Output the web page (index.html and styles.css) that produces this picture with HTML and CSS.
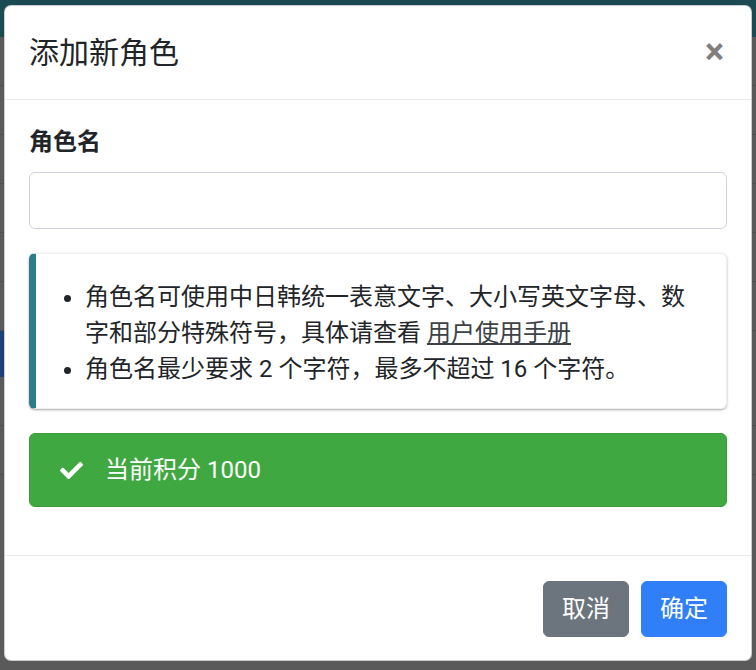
FILE: index.html
```html
<!DOCTYPE html>
<html lang="zh-CN">
<head>
<meta charset="utf-8">
<title>添加新角色</title>
<link rel="stylesheet" href="styles.css">
</head>
<body>
<div class="page">
  <div class="topbar"></div>
  <div class="page-body">
    <div class="row"></div>
    <div class="row"></div>
    <div class="row"></div>
    <div class="row"></div>
    <div class="row"></div>
    <div class="row"></div>
    <div class="row blue"></div>
    <div class="row"></div>
    <div class="row"></div>
  </div>
</div>

<div class="modal">
  <div class="modal-header">
    <h5 class="modal-title">添加新角色</h5>
    <button class="close" type="button">×</button>
  </div>
  <div class="modal-body">
    <div class="form-group">
      <label class="label">角色名</label>
      <input class="form-control" type="text">
    </div>
    <div class="callout">
      <ul class="rules">
        <li>角色名可使用中日韩统一表意文字、大小写英文字母、数字和部分特殊符号，具体请查看 <a class="link" href="#">用户使用手册</a></li>
        <li>角色名最少要求 2 个字符，最多不超过 16 个字符。</li>
      </ul>
    </div>
    <div class="alert">
      <svg class="check" viewBox="0 0 512 512" aria-hidden="true"><path d="M173.898 439.404l-166.4-166.4c-9.997-9.997-9.997-26.206 0-36.204l36.203-36.204c9.997-9.998 26.207-9.998 36.204 0L192 312.69 432.095 72.596c9.997-9.997 26.207-9.997 36.204 0l36.203 36.204c9.997 9.997 9.997 26.206 0 36.204l-294.4 294.401c-9.998 9.997-26.207 9.997-36.204-.001z" fill="#fff"/></svg>
      <span>当前积分 1000</span>
    </div>
  </div>
  <div class="modal-footer">
    <button class="btn btn-secondary" type="button">取消</button>
    <button class="btn btn-primary" type="button">确定</button>
  </div>
</div>
</body>
</html>
```

FILE: styles.css
```css
* { box-sizing: border-box; }

html, body {
  margin: 0;
  padding: 0;
}

body {
  width: 756px;
  height: 670px;
  overflow: hidden;
  position: relative;
  background: #5a5a5a;
  font-family: Roboto, "Noto Sans CJK SC", sans-serif;
  color: #212529;
}

.page {
  display: flex;
  flex-direction: column;
  height: 670px;
}

.topbar {
  height: 37px;
  background: #1c4a52;
}

.page-body {
  display: flex;
  flex-direction: column;
}

.row {
  height: 49px;
  border-bottom: 1px solid #4f4f4f;
}

.row.blue {
  height: 46px;
  width: 320px;
  background: #1d3f7a;
  border-bottom: 0;
}

.modal {
  position: absolute;
  top: 5px;
  left: 4px;
  width: 748px;
  background: #fff;
  border: 1px solid rgba(0, 0, 0, 0.2);
  border-radius: 7px;
  display: flex;
  flex-direction: column;
}

.modal-header {
  display: flex;
  align-items: flex-start;
  justify-content: space-between;
  padding: 24px;
  border-bottom: 1px solid #e9ecef;
}

.modal-title {
  margin: 0;
  font-size: 30px;
  font-weight: 400;
  line-height: 45px;
}

.close {
  padding: 28px 27px 20px 24px;
  margin: -24px -24px -24px auto;
  background: transparent;
  border: 0;
  font-family: Roboto, sans-serif;
  font-size: 36px;
  font-weight: 700;
  line-height: 1;
  color: #000;
  opacity: 0.5;
}

.modal-body {
  padding: 24px;
  display: flex;
  flex-direction: column;
}

.form-group {
  margin-bottom: 24px;
  display: flex;
  flex-direction: column;
  align-items: flex-start;
}

.label {
  font-size: 24px;
  line-height: 36px;
  font-weight: 700;
  margin-bottom: 12px;
}

.form-control {
  display: block;
  width: 100%;
  height: 57px;
  padding: 9px 18px;
  font-size: 24px;
  border: 1px solid #ced4da;
  border-radius: 6px;
  background: #fff;
}

.callout {
  border: 1px solid #f0f0f0;
  border-left: 7px solid #2c7d8b;
  border-radius: 6px;
  box-shadow: 0 1px 3px rgba(0, 0, 0, 0.12), 0 1px 2px rgba(0, 0, 0, 0.24);
  padding: 25px 24px 21px 24px;
  margin-bottom: 24px;
  background: #fff;
}

.rules {
  margin: 0;
  padding-left: 25px;
  font-size: 24px;
  line-height: 36px;
}

.link {
  color: #3d4247;
  text-decoration: underline;
}

.alert {
  display: flex;
  align-items: center;
  background: #40a840;
  border: 1px solid #3a9c3a;
  border-radius: 6px;
  padding: 18px 30px;
  color: #fff;
  font-size: 24px;
  line-height: 36px;
  margin-bottom: 24px;
}

.check {
  width: 23px;
  height: 23px;
  margin-right: 22px;
  flex: none;
}

.modal-footer {
  display: flex;
  justify-content: flex-end;
  align-items: center;
  padding: 18px;
  border-top: 1px solid #e9ecef;
}

.btn {
  margin: 7px 6px 5px;
  padding: 9px 18px;
  font-family: Roboto, "Noto Sans CJK SC", sans-serif;
  font-size: 24px;
  line-height: 36px;
  border-radius: 6px;
  border: 1px solid transparent;
  color: #fff;
}

.btn-secondary {
  background: #6c757d;
  border-color: #6c757d;
}

.btn-primary {
  background: #307ff9;
  border-color: #307ff9;
}
```
